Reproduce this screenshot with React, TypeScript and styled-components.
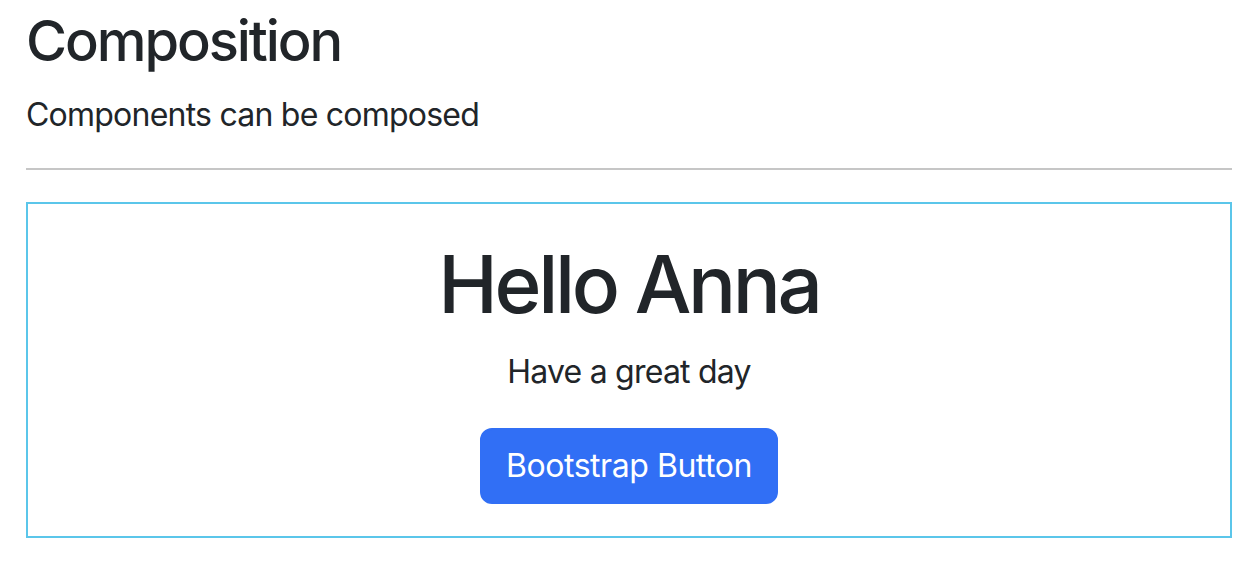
import styled, { createGlobalStyle } from "styled-components";

const GlobalStyle = createGlobalStyle`
  body {
    margin: 0;
    background: #ffffff;
    color: #212529;
    font-family: Inter, "Helvetica Neue", "Liberation Sans", Arial, sans-serif;
    font-size: 32px;
    line-height: 1.5;
    letter-spacing: -0.024em;
  }
`;

const Page = styled.main`
  padding: 8px 20px 0 26px;
`;

const Title = styled.h3`
  margin: 0 0 16px;
  font-size: 56px;
  font-weight: 500;
  line-height: 1.2;
  letter-spacing: -0.037em;
`;

const Lead = styled.p`
  margin: 0 0 29px;
`;

const Divider = styled.hr`
  margin: 0 0 32px;
  border: 0;
  border-top: 2px solid #c6c6c6;
`;

const Card = styled.section`
  border: 2px solid #5bc6ea;
  padding: 32px;
  text-align: center;
`;

const Greeting = styled.h1`
  margin: 0 0 16px;
  font-size: 80px;
  font-weight: 500;
  line-height: 1.2;
  letter-spacing: -0.042em;
`;

const Message = styled.p`
  margin: 0 0 32px;
`;

const Button = styled.button`
  font-family: inherit;
  font-size: 32px;
  line-height: 1.5;
  letter-spacing: -0.014em;
  color: #ffffff;
  background: #316ff5;
  border: 2px solid #316ff5;
  border-radius: 12px;
  padding: 12px 24px;
  cursor: pointer;
`;

export default function App() {
  return (
    <>
      <GlobalStyle />
      <Page>
        <Title>Composition</Title>
        <Lead>Components can be composed</Lead>
        <Divider />
        <Card>
          <Greeting>Hello Anna</Greeting>
          <Message>Have a great day</Message>
          <Button type="button">Bootstrap Button</Button>
        </Card>
      </Page>
    </>
  );
}
